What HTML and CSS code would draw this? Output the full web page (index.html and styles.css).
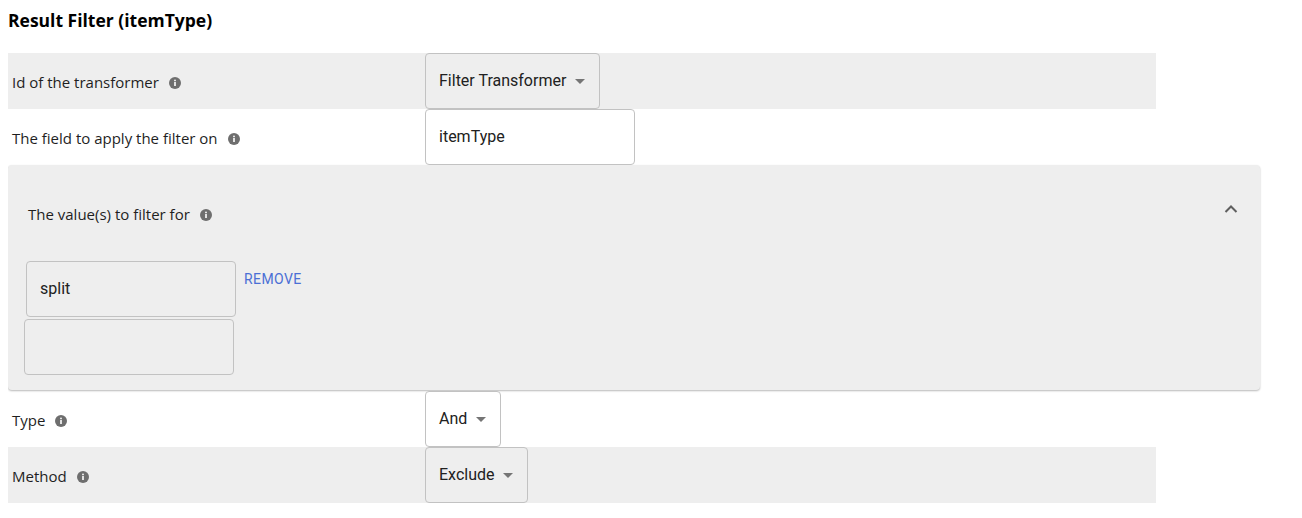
FILE: index.html
```html
<!DOCTYPE html>
<html lang="en">
<head>
    <meta charset="UTF-8">
    <title>Result Filter</title>
    <link rel="stylesheet" href="styles.css">
</head>
<body>
    <h3 class="form-title">Result Filter (itemType)</h3>

    <div class="form-rows">
        <div class="form-row shaded">
            <div class="row-label">Id of the transformer <span class="info-icon"><svg viewBox="0 0 12 12" width="12" height="12"><circle cx="6" cy="6" r="6" fill="#6e6e6e"/><rect x="5.2" y="5" width="1.6" height="4" fill="#fff"/><circle cx="6" cy="3.4" r="0.9" fill="#fff"/></svg></span></div>
            <div class="select-box">Filter Transformer <span class="caret"></span></div>
        </div>
        <div class="form-row">
            <div class="row-label">The field to apply the filter on <span class="info-icon"><svg viewBox="0 0 12 12" width="12" height="12"><circle cx="6" cy="6" r="6" fill="#6e6e6e"/><rect x="5.2" y="5" width="1.6" height="4" fill="#fff"/><circle cx="6" cy="3.4" r="0.9" fill="#fff"/></svg></span></div>
            <div class="text-box white">itemType</div>
        </div>
    </div>

    <div class="array-panel">
        <div class="panel-header">
            <div class="row-label">The value(s) to filter for <span class="info-icon"><svg viewBox="0 0 12 12" width="12" height="12"><circle cx="6" cy="6" r="6" fill="#6e6e6e"/><rect x="5.2" y="5" width="1.6" height="4" fill="#fff"/><circle cx="6" cy="3.4" r="0.9" fill="#fff"/></svg></span></div>
            <svg class="chevron" viewBox="0 0 14 9" width="14" height="9"><path d="M1.5 8 L7 2.5 L12.5 8" fill="none" stroke="#5f5f5f" stroke-width="2"/></svg>
        </div>
        <div class="value-list">
            <div class="value-item first">
                <div class="text-box">split</div>
                <button class="remove-btn">REMOVE</button>
            </div>
            <div class="value-item">
                <div class="text-box"></div>
            </div>
        </div>
    </div>

    <div class="form-rows">
        <div class="form-row">
            <div class="row-label">Type <span class="info-icon"><svg viewBox="0 0 12 12" width="12" height="12"><circle cx="6" cy="6" r="6" fill="#6e6e6e"/><rect x="5.2" y="5" width="1.6" height="4" fill="#fff"/><circle cx="6" cy="3.4" r="0.9" fill="#fff"/></svg></span></div>
            <div class="select-box white">And <span class="caret"></span></div>
        </div>
        <div class="form-row shaded">
            <div class="row-label">Method <span class="info-icon"><svg viewBox="0 0 12 12" width="12" height="12"><circle cx="6" cy="6" r="6" fill="#6e6e6e"/><rect x="5.2" y="5" width="1.6" height="4" fill="#fff"/><circle cx="6" cy="3.4" r="0.9" fill="#fff"/></svg></span></div>
            <div class="select-box">Exclude <span class="caret"></span></div>
        </div>
    </div>
</body>
</html>
```

FILE: styles.css
```css
* {
    box-sizing: border-box;
}

body {
    margin: 8px;
    font-family: 'Open Sans', 'Noto Sans', sans-serif;
    color: #1f1f1f;
    background: #fff;
}

.form-title {
    margin: 0 0 21px;
    font-size: 17.5px;
    line-height: 24px;
    font-weight: 700;
    color: #000;
}

.form-rows {
    width: 1148px;
}

.form-row {
    display: grid;
    grid-template-columns: 417px auto;
    align-items: center;
    height: 56px;
}

.form-row.shaded {
    background: #eeeeee;
}

.row-label {
    display: flex;
    align-items: center;
    padding: 2px 0 0 4px;
    font-size: 15px;
    line-height: 20px;
}

.info-icon {
    display: inline-flex;
    margin-left: 10px;
    margin-top: 1px;
}

.select-box,
.text-box {
    display: flex;
    align-items: center;
    height: 56px;
    padding: 0 13px 2px;
    border: 1px solid #c2c2c2;
    border-radius: 4px;
    font-family: Roboto, 'Liberation Sans', sans-serif;
    font-size: 16px;
    color: #212121;
}

.select-box {
    justify-self: start;
    white-space: pre;
}

.text-box {
    width: 210px;
    justify-self: start;
}

.white {
    background: #fff;
}

.caret {
    width: 0;
    height: 0;
    margin-left: 5px;
    margin-top: 3px;
    margin-right: 1px;
    border-left: 5px solid transparent;
    border-right: 5px solid transparent;
    border-top: 5px solid #757575;
}

.array-panel {
    width: 1252px;
    background: #eeeeee;
    border-radius: 4px;
    box-shadow: 0 1px 2px rgba(0, 0, 0, 0.28);
    padding: 0 22px 15px 16px;
    margin-bottom: 1px;
}

.panel-header {
    display: flex;
    align-items: center;
    justify-content: space-between;
    height: 96px;
}

.chevron {
    margin-bottom: 10px;
}

.value-list {
    display: flex;
    flex-direction: column;
    gap: 2px;
}

.value-item {
    display: flex;
    align-items: flex-start;
}

.value-item.first {
    margin-left: 2px;
}

.remove-btn {
    margin: 10px 0 0 4px;
    padding: 0 4px;
    background: none;
    border: none;
    font-family: Roboto, 'Liberation Sans', sans-serif;
    font-size: 14px;
    font-weight: 400;
    letter-spacing: 0.4px;
    color: #4b6fd5;
    cursor: pointer;
}
```
